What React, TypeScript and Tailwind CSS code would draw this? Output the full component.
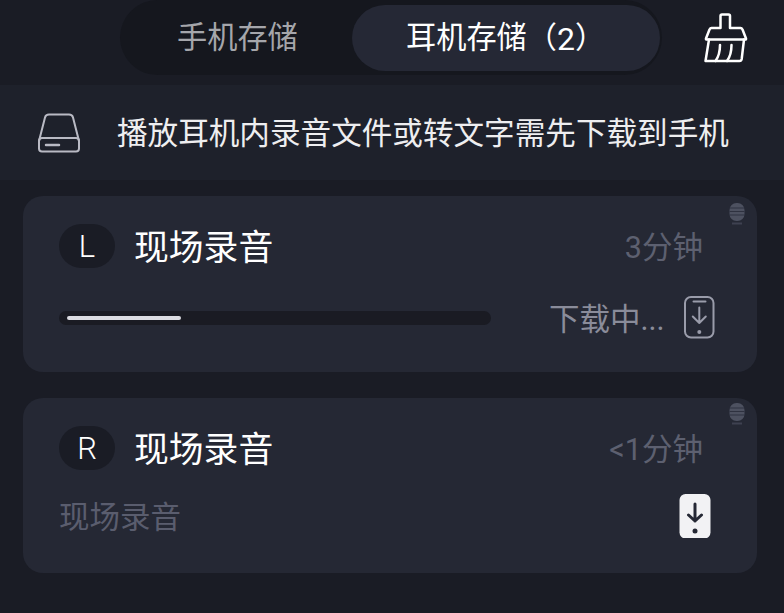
const FONT = "font-['Roboto','Noto_Sans_CJK_SC',sans-serif]";

/** Little mic in the card corner. */
function MicMark() {
  return (
    <svg viewBox="0 0 16 23" className="h-[23px] w-4" aria-hidden="true">
      <rect x="0.500" y="0" width="15" height="18" rx="7" fill="#4d5160" />
      <path d="M0.500 5h15M0.500 8.500h15M0.500 12h15" stroke="#2f3240" strokeWidth="1" />
      <path d="M3 20.500h10" stroke="#3e4150" strokeWidth="2" />
    </svg>
  );
}

function BroomIcon() {
  return (
    <svg viewBox="0 0 44 50" className="h-[50px] w-11" fill="none" stroke="#fff" strokeWidth="2.500" strokeLinejoin="round" strokeLinecap="round" aria-hidden="true">
      <path d="M16.500 15V3a1.500 1.500 0 0 1 1.500-1.500h6.500A1.500 1.500 0 0 1 26 3v12h10.500c1 0 1.500.5 2 1.500L42 25.500c.3.8 0 1-1 1H3c-1 0-1.300-.2-1-1l3.500-9c.5-1 1-1.500 2-1.500z" />
      <path d="M5 26.500 1.500 48h34c1.500 0 2-1 2.200-2L40 26.500" />
      <path d="M16 32c0 6-1.200 11.500-4.500 16M27.500 32c0 6-1.200 11.500-4.500 16" />
    </svg>
  );
}

function DriveIcon() {
  return (
    <svg viewBox="0 0 44 42" className="h-[42px] w-11" fill="none" stroke="#b9bac4" strokeWidth="2" strokeLinejoin="round" aria-hidden="true">
      <path d="M2 29 8 5.500C8.500 3.500 10 2.500 12 2.500h20c2 0 3.500 1 4 3L42 29" />
      <rect x="2" y="26" width="40" height="13.500" rx="3" />
      <path d="M9 33h13" strokeWidth="2.500" strokeLinecap="round" />
    </svg>
  );
}

function PhoneOutlineIcon() {
  return (
    <svg viewBox="0 0 32 44" className="h-11 w-8" fill="none" stroke="#9a9caa" strokeWidth="2" strokeLinecap="round" strokeLinejoin="round" aria-hidden="true">
      <rect x="1" y="1" width="28.500" height="40.500" rx="6" />
      <path d="M9.500 5.500h12M15.300 11.500V27M8.800 20.500l6.500 6.500 6.500-6.500" />
      <circle cx="15.300" cy="36" r="2" fill="#9a9caa" stroke="none" />
    </svg>
  );
}

function PhoneSolidIcon() {
  return (
    <svg viewBox="0 0 32 44" className="h-11 w-8" fill="none" aria-hidden="true">
      <rect x="0.500" y="0" width="31" height="44.500" rx="6" fill="#f2f2f4" />
      <path d="M16 10v17M9.500 21 16 27l6.500-6" stroke="#252834" strokeWidth="3" strokeLinecap="round" strokeLinejoin="round" />
      <circle cx="16" cy="37" r="2.500" fill="#252834" />
    </svg>
  );
}

function SideBadge({ side }: { side: string }) {
  return (
    <span className="flex h-11 w-14 items-center justify-center rounded-full bg-[#1a1c25] text-[31px] font-light leading-none text-white">
      {side}
    </span>
  );
}

export default function App() {
  return (
    <div className={`${FONT} flex h-[613px] w-[784px] flex-col overflow-hidden bg-[#1a1c25]`}>
      {/* tabs */}
      <div className="flex h-[85px] items-start pl-[120px]">
        <div className="flex h-[75px] w-[542px] items-center rounded-full bg-[#15171e] pr-0.5">
          <span className="w-[232px] pl-[57px] pt-0.5 text-[30.200px] leading-none text-[#a5a6ab]">手机存储</span>
          <span className="flex h-[66px] w-[308px] items-center rounded-full bg-[#252835] pl-[54px] pt-0.5 text-[30.200px] leading-none text-white">
            耳机存储（<span className="text-[32px] leading-none">2</span>）
          </span>
        </div>
        <div className="ml-[42px] mt-[13px]">
          <BroomIcon />
        </div>
      </div>

      {/* notice */}
      <div className="flex h-[95px] items-center bg-[#1e212b] pl-[37px]">
        <DriveIcon />
        <span className="ml-9 whitespace-nowrap pt-1 text-[30.600px] leading-none text-[#eeeef0]">
          播放耳机内录音文件或转文字需先下载到手机
        </span>
      </div>

      {/* recordings */}
      <div className="flex flex-col gap-[26px] pl-[23px] pr-[27px] pt-4">
        <div className="relative h-[176px] rounded-[20px] bg-[#252834] pl-9 pr-[54px] pt-[28px]">
          <div className="absolute right-3 top-[7px]">
            <MicMark />
          </div>
          <div className="flex items-center">
            <SideBadge side="L" />
            <span className="ml-[19px] pt-1 text-[34.800px] leading-none text-white">现场录音</span>
            <span className="ml-auto pt-1 text-[30.500px] leading-none text-[#5d6070]">3分钟</span>
          </div>
          <div className="mt-[28px] flex items-center">
            <div className="flex h-[14px] w-[432px] items-center rounded-full bg-[#1a1b23] px-2">
              <div className="h-1 w-[114px] rounded-full bg-[#dcdce2]" />
            </div>
            <span className="ml-[58px] pt-1 text-[30.500px] leading-none text-[#8a8c9a]">下载中...</span>
            <div className="-mr-[13px] ml-auto">
              <PhoneOutlineIcon />
            </div>
          </div>
        </div>

        <div className="relative h-[175px] rounded-[20px] bg-[#252834] pl-9 pr-[54px] pt-[28px]">
          <div className="absolute right-3 top-[5px]">
            <MicMark />
          </div>
          <div className="flex items-center">
            <SideBadge side="R" />
            <span className="ml-[19px] pt-1 text-[34.800px] leading-none text-white">现场录音</span>
            <span className="ml-auto pt-1 text-[30.500px] leading-none text-[#5d6070]">&lt;1分钟</span>
          </div>
          <div className="mt-[24px] flex items-center justify-between">
            <span className="pt-1 text-[30.500px] leading-none text-[#5a5d6e]">现场录音</span>
            <div className="-mr-2">
              <PhoneSolidIcon />
            </div>
          </div>
        </div>
      </div>
    </div>
  );
}
